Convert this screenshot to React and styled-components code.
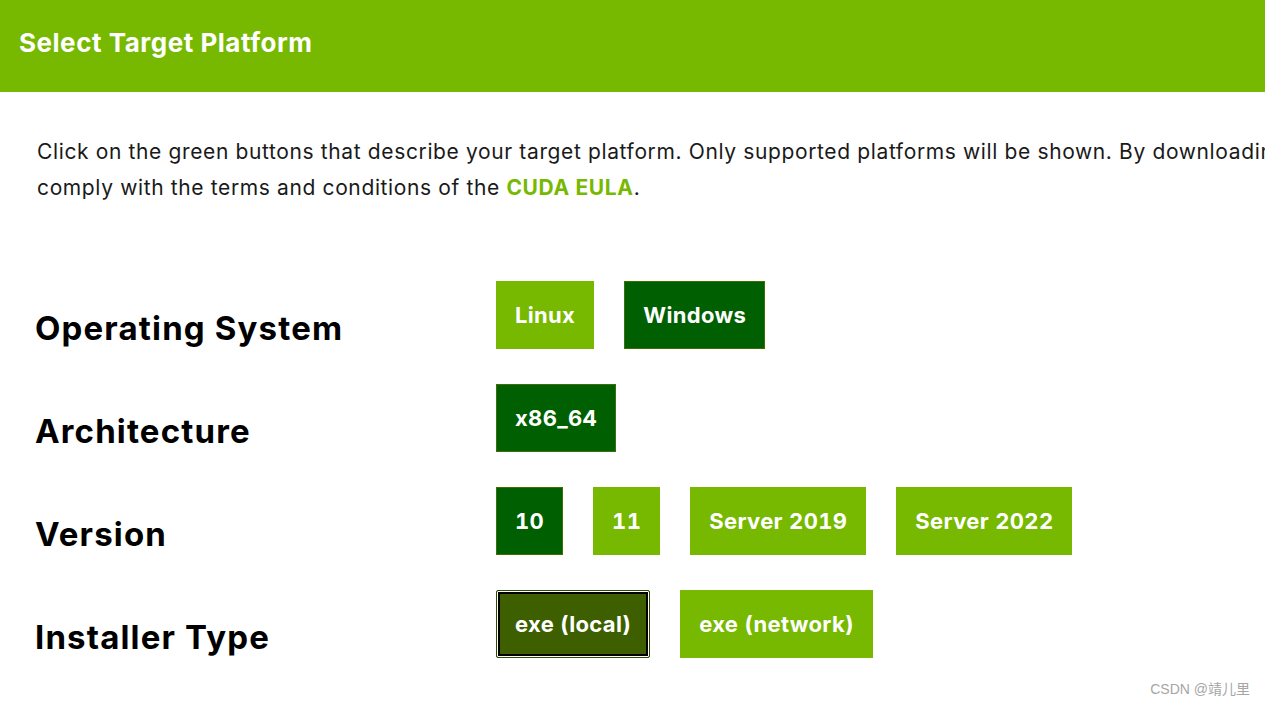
import styled, { createGlobalStyle } from 'styled-components';

const GlobalStyle = createGlobalStyle`
  html, body {
    margin: 0;
    padding: 0;
    overflow: hidden;
    background: #fff;
  }
  body {
    font-family: Inter, 'Noto Sans', sans-serif;
  }
`;

const Page = styled.div`
  width: 1265px;
  height: 706px;
  position: relative;
  overflow: hidden;
  background: #fff;
`;

const Header = styled.header`
  height: 92px;
  display: flex;
  align-items: center;
  padding: 0 19px;
  background-color: #76b900;
`;

const HeaderTitle = styled.h1`
  margin: 0;
  padding-bottom: 8px;
  color: #fff;
  font-size: 26px;
  font-weight: 700;
  letter-spacing: 0.02em;
`;

const Intro = styled.p`
  margin: 0;
  padding: 42px 0 0 37px;
  font-size: 21px;
  line-height: 36px;
  letter-spacing: 0.03em;
  color: #1a1a1a;
  white-space: nowrap;
`;

const EulaLink = styled.a`
  color: #76b900;
  font-weight: 700;
  text-decoration: none;
`;

const Selector = styled.div`
  display: grid;
  grid-template-columns: 461px 1fr;
  row-gap: 35px;
  padding: 75px 0 0 35px;
`;

const Label = styled.h2`
  margin: 0;
  align-self: end;
  padding-bottom: 1px;
  font-size: 33px;
  font-weight: 700;
  letter-spacing: 0.035em;
  color: #000;
`;

const Options = styled.div`
  display: flex;
  gap: 30px;
`;

const Option = styled.button`
  height: 68px;
  padding: 0 18px;
  border: 1px solid ${(p) => (p.selected ? '#3f6f00' : '#76b900')};
  border-radius: 0;
  background-color: ${(p) => (p.selected ? '#005f00' : '#76b900')};
  color: #fff;
  font-family: inherit;
  font-size: 22px;
  font-weight: 700;
  letter-spacing: 0.015em;
  font-variant-numeric: tabular-nums;
  cursor: pointer;
  ${(p) =>
    p.focused &&
    `
    background-color: #3d5f00;
    border: 1px solid #2c4a00;
    box-shadow: inset 0 0 0 1px #fff, inset 0 0 0 3px #000;
    border-radius: 2px;
  `}
`;

const Watermark = styled.div`
  position: absolute;
  right: 15px;
  bottom: 8px;
  font-family: 'Liberation Sans', 'Noto Sans CJK SC', sans-serif;
  font-size: 14px;
  color: #a6a6a6;
`;

const rows = [
  { label: 'Operating System', options: [{ name: 'Linux' }, { name: 'Windows', selected: true }] },
  { label: 'Architecture', options: [{ name: 'x86_64', selected: true }] },
  {
    label: 'Version',
    options: [{ name: '10', selected: true }, { name: '11' }, { name: 'Server 2019' }, { name: 'Server 2022' }],
  },
  {
    label: 'Installer Type',
    options: [{ name: 'exe (local)', selected: true, focused: true }, { name: 'exe (network)' }],
  },
];

const App = () => {
  return (
    <Page>
      <GlobalStyle />
      <Header>
        <HeaderTitle>Select Target Platform</HeaderTitle>
      </Header>
      <Intro>
        Click on the green buttons that describe your target platform. Only supported platforms will be shown. By
        downloading and using the software, you agree to fully
        <br />
        comply with the terms and conditions of the <EulaLink href="#">CUDA EULA</EulaLink>.
      </Intro>
      <Selector>
        {rows.map((row) => (
          <>
            <Label key={row.label}>{row.label}</Label>
            <Options key={row.label + '-opts'}>
              {row.options.map((opt) => (
                <Option key={opt.name} selected={opt.selected} focused={opt.focused}>
                  {opt.name}
                </Option>
              ))}
            </Options>
          </>
        ))}
      </Selector>
      <Watermark>CSDN @靖儿里</Watermark>
    </Page>
  );
};

export default App;
